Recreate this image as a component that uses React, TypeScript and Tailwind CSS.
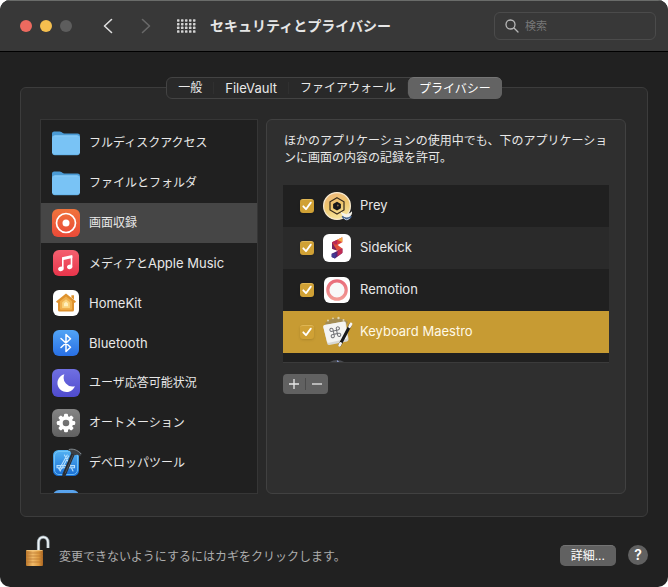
import type { ReactNode } from "react";

const FONT = "font-[Inter,'Noto_Sans_CJK_JP',sans-serif]";

function IconTile({ id, from, to, inset = 0, children }: { id: string; from: string; to: string; inset?: number; children?: ReactNode }) {
  return (
    <svg viewBox="0 0 28 28" className="size-7 shrink-0" aria-hidden="true">
      <defs>
        <linearGradient id={id} x1="0" y1="0" x2="0" y2="1">
          <stop offset="0" stopColor={from} />
          <stop offset="1" stopColor={to} />
        </linearGradient>
      </defs>
      <rect x={inset} y={inset} width={28 - inset * 2} height={28 - inset * 2} rx="6" fill={`url(#${id})`} />
      {children}
    </svg>
  );
}

function FolderIcon() {
  return (
    <svg viewBox="0 0 28 28" className="size-7 shrink-0" aria-hidden="true">
      <path d="M0 6V4.600Q0 2.400 2.200 2.400H7.600Q8.600 2.400 9.400 3L10.400 3.800Q11.200 4.400 12.400 4.400H25.600Q28 4.400 28 6.800V12H0Z" fill="#4a9ad4" />
      <rect x="0" y="6.600" width="28" height="19.400" rx="2.400" fill="#79c3f5" />
      <path d="M2.400 6.900H25.600" stroke="#9ad6fb" strokeWidth="0.7" />
      <path d="M1 25Q2 25.800 3 25.800H25Q26.500 25.800 27 25" fill="none" stroke="#5fb0e6" strokeWidth="0.7" />
    </svg>
  );
}

function RecordIcon() {
  return (
    <IconTile id="rec" from="#f0743c" to="#ea4a38">
      <circle cx="14" cy="14" r="9.500" fill="none" stroke="#fff" strokeWidth="1.700" />
      <circle cx="14" cy="14" r="3.500" fill="#fff" />
    </IconTile>
  );
}

function MusicIcon() {
  return (
    <IconTile id="music" from="#f4606f" to="#e8354b" inset={1}>
      <path d="M10 8.300 20.300 6.100V9L11.600 10.900V19.300H10Z" fill="#fff" />
      <path d="M18.700 7H20.300V17.500H18.700Z" fill="#fff" />
      <ellipse cx="8.900" cy="19.800" rx="2.800" ry="2.200" transform="rotate(-18 8.900 19.800)" fill="#fff" />
      <ellipse cx="17.700" cy="17.800" rx="2.700" ry="2.200" transform="rotate(-18 17.700 17.800)" fill="#fff" />
    </IconTile>
  );
}

function HomeIcon() {
  return (
    <IconTile id="home" from="#ffffff" to="#ffffff" inset={1}>
      <path d="M14 4.600 24 12.600 22.800 14 22 13.400V21Q22 22.600 20.400 22.600H7.600Q6 22.600 6 21V13.400L5.200 14 4 12.600Z" fill="#de922e" />
      <path d="M19.400 6.200H22V10.500L19.400 8.500Z" fill="#de922e" />
      <path d="M14 7.500 20 12.300V19.800Q20 20.800 19 20.800H9Q8 20.800 8 19.800V12.300Z" fill="#efb04d" />
      <path d="M14 10.300 17.900 13.400V18.900H10.100V13.400Z" fill="#f9d27b" />
      <path d="M14 12.800 16 14.400V17.200H12V14.400Z" fill="#fff0bd" />
    </IconTile>
  );
}

function BluetoothIcon() {
  return (
    <IconTile id="bt" from="#52a4f5" to="#286fe4" inset={1}>
      <path d="M9 9.500 18.500 18.200 14 22.500V5.500L18.500 9.800 9 18.500" fill="none" stroke="#fff" strokeWidth="1.500" strokeLinejoin="round" strokeLinecap="round" />
    </IconTile>
  );
}

function MoonIcon() {
  return (
    <IconTile id="moon" from="#7070e2" to="#4f4bce">
      <path d="M12.400 5.300A9 9 0 1 0 22.900 17.200A8.800 8.800 0 0 1 12.400 5.300Z" fill="#fff" />
    </IconTile>
  );
}

const TEETH = [0, 45, 90, 135, 180, 225, 270, 315];

function GearIcon() {
  return (
    <IconTile id="gear" from="#858585" to="#606060">
      {TEETH.map((angle) => (
        <rect key={angle} x="12" y="4.800" width="4" height="5" rx="1.200" fill="#fff" transform={`rotate(${angle} 14 14)`} />
      ))}
      <circle cx="14" cy="14" r="5.200" fill="none" stroke="#fff" strokeWidth="3.800" />
    </IconTile>
  );
}

function DeveloperIcon() {
  return (
    <svg viewBox="0 0 28 28" className="size-7 shrink-0" overflow="visible" aria-hidden="true">
      <defs>
        <linearGradient id="dev" x1="0" y1="0" x2="0" y2="1">
          <stop offset="0" stopColor="#55b4f4" />
          <stop offset="1" stopColor="#176cd3" />
        </linearGradient>
      </defs>
      <rect x="1" y="1" width="26" height="26" rx="5.500" fill="url(#dev)" />
      <rect x="2.500" y="2.500" width="23" height="23" rx="4.500" fill="none" stroke="#7bcbfa" strokeWidth="0.8" />
      <g fill="none" stroke="#b5dffd" strokeWidth="1.100" strokeLinecap="round">
        <path d="M12.400 6 18.800 17.300M15.200 6 7.600 19.400M16.600 7 10 19.400M5 16.600H22.500V18.800H5ZM6.400 19 8.200 21.800 9.600 19.200M19.500 19 21 22" />
      </g>
      <path d="M21.500 3.700 12 26" stroke="#292c31" strokeWidth="3.600" strokeLinecap="round" />
      <path d="M21 6 13.200 24.200" stroke="#5b6168" strokeWidth="0.7" />
      <path d="M16 .4C19-1 25.500-.6 30 4.800L28 7.600C26.200 5.600 24.700 5.200 22.800 6.200L19 4.600C19 2.500 17.800 1.600 16 1.500Z" fill="#3b4045" />
      <path d="M17 .5C21-.5 25.500.8 29 5" fill="none" stroke="#92989c" strokeWidth="0.8" />
    </svg>
  );
}

function PreyIcon() {
  return (
    <svg viewBox="0 0 28 28" className="size-7 shrink-0" overflow="visible" aria-hidden="true">
      <defs>
        <linearGradient id="prey" x1="0" y1="0" x2="0.3" y2="1">
          <stop offset="0" stopColor="#edb67f" />
          <stop offset="0.55" stopColor="#efc66c" />
          <stop offset="1" stopColor="#f5e19a" />
        </linearGradient>
      </defs>
      <circle cx="14" cy="14" r="13.400" fill="url(#prey)" stroke="#f7ead0" strokeWidth="1.200" />
      <path d="M14 5.800 21 9.800V18L14 22 7 18V9.800Z" fill="none" stroke="#382b1c" strokeWidth="1.200" />
      <path d="M14 9.800 17.900 12V16.300L14 18.500 10.100 16.300V12Z" fill="#17171a" />
      <circle cx="14.800" cy="13.500" r="0.900" fill="#8b6d44" />
      <path d="M18.600 24.600A5.600 5.600 0 0 0 28.800 24.600L26.500 23H21Z" fill="#48658f" />
      <path d="M17.700 19.500C20 21.500 22 21.400 23.700 22.400C25.400 21.400 27.200 21.200 29 19.200C29.400 22.700 27.500 25 23.700 25.600C20.400 25 18.200 23 17.700 19.500Z" fill="#f5f3eb" />
      <path d="M21 26A3 3 0 0 0 26.500 26" fill="none" stroke="#b8c8de" strokeWidth="1" />
    </svg>
  );
}

function SidekickIcon() {
  return (
    <svg viewBox="0 0 28 28" className="size-7 shrink-0" aria-hidden="true">
      <rect width="28" height="28" rx="6" fill="#fff" />
      <path d="M9 8.300 19.300 3.200V8.300L14 11.200 9 14Z" fill="#dc3e3e" />
      <path d="M14.300 5.700 19.300 3.200V8.300Z" fill="#f3ab45" />
      <path d="M9 8.300 14.300 5.700 14 11.200Z" fill="#b62758" />
      <path d="M9 11.300 14 10.500 19.300 14.500V18.800L14 16.500 9 14.800Z" fill="#e14e3b" />
      <path d="M9 8.300V14.800L14 16.500Z" fill="#782360" />
      <path d="M8.700 19.800 19.300 14.500V19L12 24.500 8.700 23Z" fill="#562477" />
      <path d="M14.500 17 19.300 14.500V19L14.500 22.500Z" fill="#c02c53" />
      <path d="M8.700 19.800 13 19.500 12 24.500 8.700 23Z" fill="#3e3b93" />
    </svg>
  );
}

function RemotionIcon() {
  return (
    <svg viewBox="0 0 28 28" className="size-7 shrink-0" aria-hidden="true">
      <defs>
        <linearGradient id="remotion" x1="0" y1="0" x2="0" y2="1">
          <stop offset="0" stopColor="#e96d7b" />
          <stop offset="1" stopColor="#f29a94" />
        </linearGradient>
      </defs>
      <rect x="1" y="1" width="26" height="26" rx="6" fill="#fff" />
      <circle cx="14" cy="14" r="9.200" fill="#f8f8f8" stroke="url(#remotion)" strokeWidth="3.200" />
    </svg>
  );
}

function KeyboardMaestroIcon() {
  return (
    <svg viewBox="0 0 28 28" className="size-7 shrink-0" overflow="visible" aria-hidden="true">
      <path d="M2 5Q12-4 25 4L22 9H4Z" fill="#a38c54" />
      <g fill="#ded4b1">
        <circle cx="5" cy="2.500" r="1" />
        <circle cx="10" cy="0.300" r="0.900" />
        <circle cx="15.500" cy="0" r="1.200" />
        <circle cx="20.500" cy="2" r="1" />
      </g>
      <path d="M1.500 7 21 3.600Q22.600 3.300 23 5L25.500 21Q25.700 23 24 23.400L6.500 27Q4.700 27.300 4.200 25.500L.3 9Q0 7.300 1.500 7Z" fill="#d7d7d3" />
      <path d="M1.600 7 20.500 3.600Q22 3.400 22.400 5L24.300 19Q24.500 20.700 23 21L6 24.700Q4.500 25 4 23.400L.3 9Q0 7.300 1.600 7Z" fill="#f4f4f2" />
      <g transform="translate(12.300 14.300) rotate(-12)" fill="none" stroke="#707176" strokeWidth="1">
        <path d="M-1.700-1.700H1.700V1.700H-1.700ZM-1.700-1.700H-3A1.600 1.600 0 1 1-1.700-3ZM1.700-1.700V-3A1.600 1.600 0 1 1 3-1.700ZM1.700 1.700H3A1.600 1.600 0 1 1 1.700 3ZM-1.700 1.700V3A1.600 1.600 0 1 1-3 1.700Z" />
      </g>
      <path d="M27.600 6.500 16.800 27" stroke="#17181a" strokeWidth="3" strokeLinecap="round" />
      <path d="M28 6 26.600 8.700M17.600 25.400 16.600 27.300" stroke="#f5f5f5" strokeWidth="2.800" strokeLinecap="round" />
    </svg>
  );
}

function HiddenAppIcon() {
  return (
    <svg viewBox="0 0 28 28" className="size-7 shrink-0" aria-hidden="true">
      <circle cx="14" cy="13.500" r="13.500" fill="#494b50" />
      <path d="M14 0 17 2.500H14Z" fill="#8796cc" />
    </svg>
  );
}

function PadlockIcon() {
  return (
    <svg viewBox="0 0 24 32" className="h-8 w-6 shrink-0" aria-hidden="true">
      <defs>
        <linearGradient id="brass" x1="0" y1="0" x2="1" y2="0">
          <stop offset="0" stopColor="#bb782b" />
          <stop offset="0.4" stopColor="#f0ba69" />
          <stop offset="0.75" stopColor="#dd993f" />
          <stop offset="1" stopColor="#a96420" />
        </linearGradient>
      </defs>
      <path d="M12.500 15V7.500C12.500.2 22 .2 22 7.500V13" fill="none" stroke="#8f9ba3" strokeWidth="3.200" />
      <path d="M12.500 15V7.500C12.500.2 22 .2 22 7.500V13" fill="none" stroke="#edf3f6" strokeWidth="1.700" />
      <rect x="0" y="15" width="17" height="16" rx="1" fill="url(#brass)" />
      <path d="M0 18H17M0 21H17M0 24H17M0 27H17" stroke="#b87630" strokeWidth="0.7" />
      <path d="M.5 15.500H16.500" stroke="#f5cc83" strokeWidth="0.8" />
    </svg>
  );
}

const categories: { label: ReactNode; key: string; icon: ReactNode; selected?: boolean }[] = [
  { key: "disk", label: "フルディスクアクセス", icon: <FolderIcon /> },
  { key: "files", label: "ファイルとフォルダ", icon: <FolderIcon /> },
  { key: "screen", label: "画面収録", icon: <RecordIcon />, selected: true },
  { key: "media", label: <>メディアと<span className="text-[13px]">Apple Music</span></>, icon: <MusicIcon /> },
  { key: "home", label: <span className="text-[13px]">HomeKit</span>, icon: <HomeIcon /> },
  { key: "bluetooth", label: <span className="text-[13px]">Bluetooth</span>, icon: <BluetoothIcon /> },
  { key: "focus", label: "ユーザ応答可能状況", icon: <MoonIcon /> },
  { key: "automation", label: "オートメーション", icon: <GearIcon /> },
  { key: "developer", label: "デベロッパツール", icon: <DeveloperIcon /> },
  { key: "more", label: "", icon: <IconTile id="more" from="#5aa5ee" to="#3f86dd" inset={1} /> },
];

const apps = [
  { name: "Prey", icon: <PreyIcon />, row: "bg-[#202020]" },
  { name: "Sidekick", icon: <SidekickIcon />, row: "bg-[#2a2a2a]" },
  { name: "Remotion", icon: <RemotionIcon />, row: "bg-[#202020]" },
  { name: "Keyboard Maestro", icon: <KeyboardMaestroIcon />, row: "bg-[#c79b33] text-[#fff9e6]" },
];

const tabs = [
  { label: "一般", size: "text-xs" },
  { label: "FileVault", size: "text-[13px]" },
  { label: "ファイアウォール", size: "text-xs" },
];

function TitleBar() {
  return (
    <header className="flex h-[52px] items-center border-t border-b border-t-[#6a6c6a] border-b-black bg-[#383838] pr-3 pl-5">
      <div className="flex gap-2">
        <button aria-label="閉じる" className="size-3 rounded-full bg-[#ed6a5f]" />
        <button aria-label="しまう" className="size-3 rounded-full bg-[#f5bf4f]" />
        <button aria-label="拡大" disabled className="size-3 rounded-full bg-[#5d5d5d]" />
      </div>
      <nav className="ml-[30px] flex gap-[26px]">
        <button aria-label="戻る" className="text-[#dedede]">
          <svg viewBox="0 0 12 16" className="h-4 w-3" fill="none" stroke="currentColor" strokeWidth="1.600" strokeLinecap="round" strokeLinejoin="round">
            <path d="M9.500 1.500 2.500 8 9.500 14.500" />
          </svg>
        </button>
        <button aria-label="進む" disabled className="text-[#686868]">
          <svg viewBox="0 0 12 16" className="h-4 w-3" fill="none" stroke="currentColor" strokeWidth="1.600" strokeLinecap="round" strokeLinejoin="round">
            <path d="M2.500 1.500 9.500 8 2.500 14.500" />
          </svg>
        </button>
      </nav>
      <button aria-label="すべてを表示" className="ml-6 text-[#d2d2d2]">
        <svg viewBox="0 0 20 14" className="h-3.5 w-5" fill="currentColor">
          {[0, 1, 2, 3].map((r) =>
            [0, 1, 2, 3, 4].map((c) => <rect key={`${r}${c}`} x={1 + c * 4} y={0.2 + r * 3.7} width="2.500" height="2.500" rx="0.6" />),
          )}
        </svg>
      </button>
      <h1 className="ml-3.5 flex-1 text-sm font-bold whitespace-nowrap text-[#e6e6e6]">セキュリティとプライバシー</h1>
      <label className="flex h-7 w-[162px] items-center gap-1.5 rounded-md border border-[#4b4b4b] px-2.5">
        <svg viewBox="0 0 14 14" className="size-3.5 shrink-0" fill="none" stroke="#b8b8b8" strokeWidth="1.300" strokeLinecap="round">
          <circle cx="5.500" cy="5.500" r="4.500" />
          <path d="M9 9 13 13" />
        </svg>
        <input type="search" aria-label="検索" placeholder="検索" className="w-full min-w-0 bg-transparent text-[11px] text-white outline-none placeholder:text-[#777]" />
      </label>
    </header>
  );
}

export default function App() {
  return (
    <div className={`${FONT} flex min-h-screen flex-col overflow-hidden rounded-[10px] bg-[#212121] text-xs text-[#e8e8e8]`} lang="ja">
      <TitleBar />
      <main className="flex flex-1 flex-col px-5 pt-[25px]">
        <div role="tablist" className="z-10 flex h-[22px] self-center rounded-md border border-[#434343] bg-[#292929]">
          {tabs.map((tab) => (
            <div key={tab.label} className="flex items-center">
              <button role="tab" aria-selected={false} className={`${tab.size} px-[11px] leading-5 whitespace-nowrap`}>
                {tab.label}
              </button>
              <span className="h-3 w-px bg-[#303030]" />
            </div>
          ))}
          <button role="tab" aria-selected className="-my-px -mr-px rounded-md border-t border-[#757575] bg-[#636363] px-[11px] leading-5 whitespace-nowrap text-white">
            プライバシー
          </button>
        </div>

        <section className="-mt-3 flex gap-2 rounded-md border border-[#3c3c3c] bg-[#292929] pt-[31px] pr-[21px] pb-[22px] pl-[19px]">
          <ul className="h-[375px] w-[218px] shrink-0 overflow-hidden border border-[#363636] bg-[#202020] pt-[3px]">
            {categories.map((c) => (
              <li key={c.key}>
                <button aria-current={c.selected} className={`${c.selected ? "bg-[#464646]" : ""} flex h-10 w-full items-center gap-[9px] pl-[11px] text-left whitespace-nowrap`}>
                  {c.icon}
                  <span className="leading-5">{c.label}</span>
                </button>
              </li>
            ))}
          </ul>

          <div className="min-w-0 flex-1 rounded-md border border-[#414141] bg-[#2f2f2f] px-4">
            <p className="mt-3 pl-px leading-[17px]">ほかのアプリケーションの使用中でも、下のアプリケーションに画面の内容の記録を許可。</p>
            <ul className="mt-[19px] h-[178px] overflow-hidden border-b border-[#3b3b3b] bg-[#202020]">
              {apps.map((app) => (
                <li key={app.name}>
                  <label className={`${app.row} flex h-[42px] items-center pl-[17px] text-[13px]`}>
                    <span className="grid size-3.5 shrink-0 place-items-center">
                      <input type="checkbox" defaultChecked className="col-start-1 row-start-1 size-3.5 appearance-none rounded-[3px] border-t border-[#dfb654] bg-[#d0a135] shadow-sm" />
                      <svg viewBox="0 0 14 14" className="pointer-events-none col-start-1 row-start-1 size-3.5" fill="none" stroke="#fff" strokeWidth="1.800" strokeLinecap="round" strokeLinejoin="round">
                        <path d="M3.300 7.300 6 10.200 10.800 3.600" />
                      </svg>
                    </span>
                    <span className="mx-[9px]">{app.icon}</span>
                    {app.name}
                  </label>
                </li>
              ))}
              <li className="h-[42px] pt-[7px] pl-10">
                <HiddenAppIcon />
              </li>
            </ul>
            <div className="mt-[11px] inline-flex h-5 items-center rounded bg-[#616161] text-[#e8e8e8]">
              <button aria-label="追加" className="flex w-[22px] justify-center">
                <svg viewBox="0 0 12 12" className="size-3" stroke="currentColor" strokeWidth="1.300">
                  <path d="M1 6H11M6 1V11" />
                </svg>
              </button>
              <span className="h-3 w-px bg-[#4b4b4b]" />
              <button aria-label="削除" className="flex w-[22px] justify-center">
                <svg viewBox="0 0 12 12" className="size-3" stroke="currentColor" strokeWidth="1.300">
                  <path d="M1 6H11" />
                </svg>
              </button>
            </div>
          </div>
        </section>

        <footer className="flex items-center pt-[18px] pl-1.5">
          <button aria-label="ロック" className="shrink-0">
            <PadlockIcon />
          </button>
          <p className="ml-[9px] flex-1 pt-[11px] leading-5 text-[#adadad]">変更できないようにするにはカギをクリックします。</p>
          <button className="mt-2 h-[21px] rounded-[5px] border-t border-[#747474] bg-[#616161] px-[11px] leading-5 text-white">詳細...</button>
          <button aria-label="ヘルプ" className="mt-2 ml-3 size-5 rounded-full bg-[#616161] text-sm leading-5 font-semibold text-white">?</button>
        </footer>
      </main>
    </div>
  );
}
